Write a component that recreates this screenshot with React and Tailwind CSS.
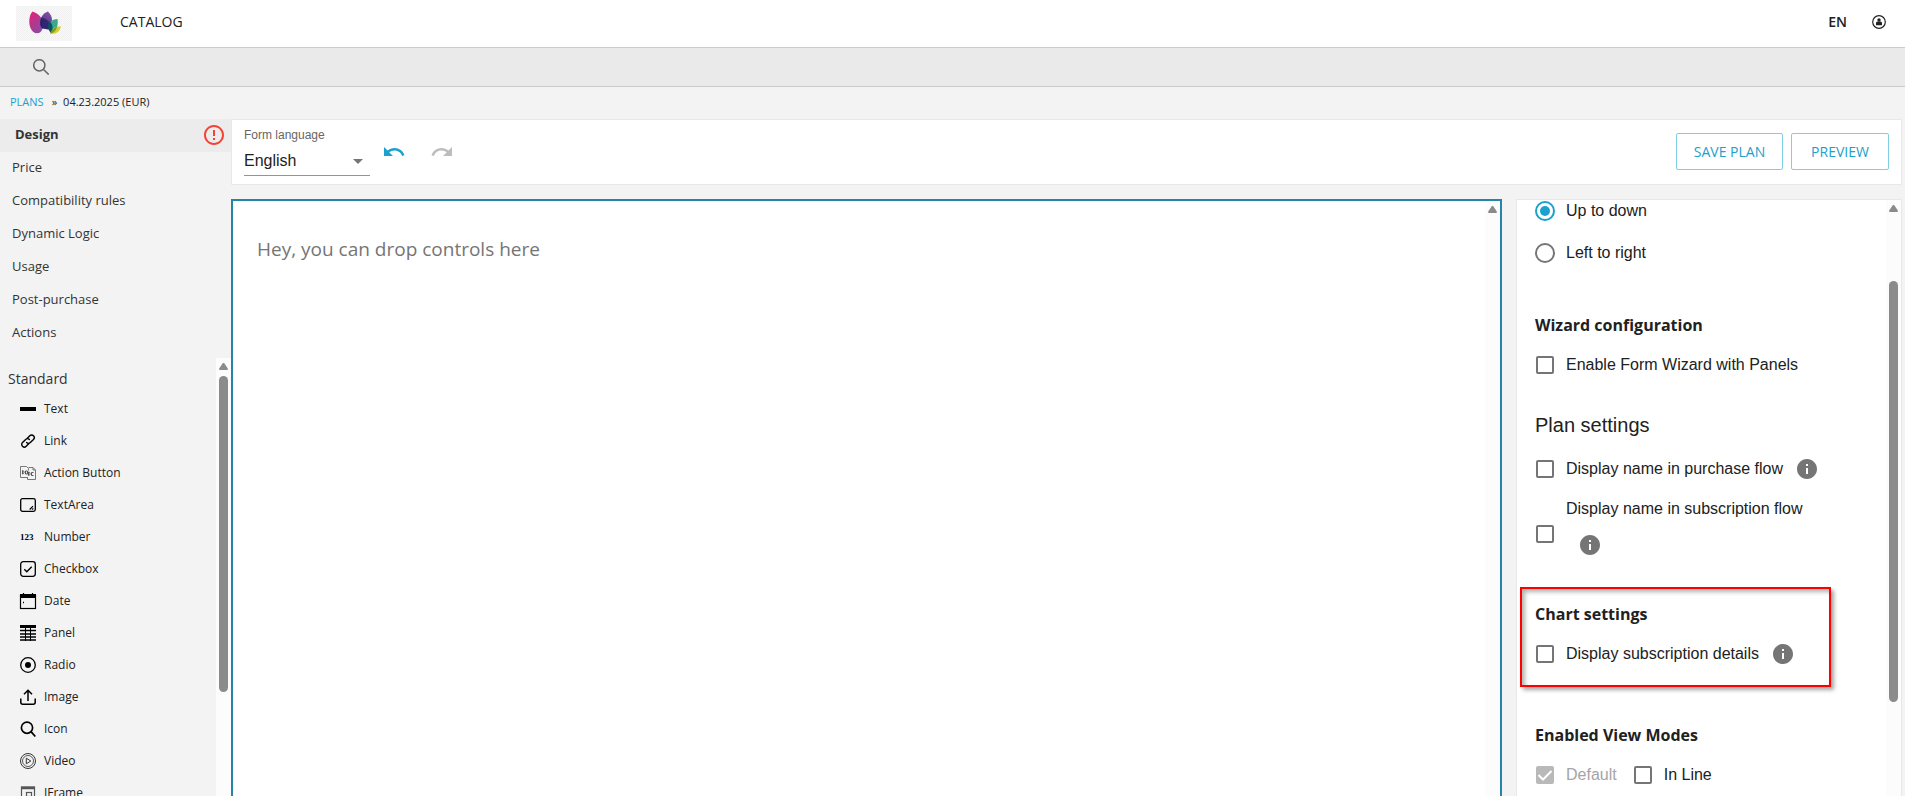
import React, { useState } from 'react';
import { MdErrorOutline, MdInfo, MdRedo, MdUndo } from 'react-icons/md';

const navItems = ['Design', 'Price', 'Compatibility rules', 'Dynamic Logic', 'Usage', 'Post-purchase', 'Actions'];

const Logo = () => (
  <svg viewBox="0 0 56 35" className="w-14 h-[35px]" aria-label="Home">
    <defs>
      <pattern id="logoDots" width="2" height="2" patternUnits="userSpaceOnUse">
        <rect width="2" height="2" fill="#f8f8f8" />
        <rect width="1" height="1" fill="#f1f1f1" />
        <rect x="1" y="1" width="1" height="1" fill="#f1f1f1" />
      </pattern>
      <linearGradient id="logoPink" x1="0" y1="0" x2="0.6" y2="1">
        <stop offset="0" stopColor="#ea1e79" />
        <stop offset="1" stopColor="#8b4a9e" />
      </linearGradient>
      <linearGradient id="logoPurple" x1="0.7" y1="0" x2="0.3" y2="1">
        <stop offset="0" stopColor="#8a4fa0" />
        <stop offset="1" stopColor="#2f3488" />
      </linearGradient>
    </defs>
    <rect width="56" height="35" fill="url(#logoDots)" />
    <path d="M16.500 5.500C13 9 12.500 17 14.500 22c1.800 4.500 6 6.500 9.500 4.500 3-2.500 4-7.500 2.500-12C25 10 21.500 7 16.500 5.500Z" fill="url(#logoPink)" />
    <path d="M32 5.500c-5 2-8 6-8 11 0 3.500 2 6 5 6.500 4 0 7-4 7-9C36 10.500 34.500 8 32 5.500Z" fill="url(#logoPurple)" />
    <path d="M41.500 13c-6 .3-9 3.500-9 8 .2 3 2 5.500 4 6C40.500 24.500 42.500 19 41.500 13Z" fill="#3aa78e" />
    <path d="M45 20.500c-6-.5-10 2-11 7 5 1.300 9.500-1 11-7Z" fill="#d6cf2b" />
    <path d="M26 11.500c-2.500 3.500-2.500 9 1 11.500 3-3 3-8-1-11.500Z" fill="#2a2170" />
    <path d="M27 12c4.500 1 8 6 8.500 11-4.500 1-8 0-9.500-3Z" fill="#33266f" />
    <path d="M33.500 15c-2 3.500-2 8.500 1.500 12 2.500-3.500 2-8.500-1.500-12Z" fill="#0d5060" />
    <path d="M34.500 27.500c.5-3.500 3-6 6.500-6.800-.5 3-2.700 6-6.500 6.800Z" fill="#7b9a2a" />
  </svg>
);

const SearchIcon = () => (
  <svg viewBox="0 0 16 16" className="w-4 h-4" fill="none" stroke="#666" strokeWidth="1.5">
    <circle cx="6.300" cy="6.300" r="5.600" />
    <path d="m10.300 10.300 5.400 5.300" />
  </svg>
);

const AccountIcon = () => (
  <svg viewBox="0 0 14 14" className="w-3.5 h-3.5">
    <circle cx="7" cy="7" r="6.300" fill="none" stroke="#222" strokeWidth="1.200" />
    <circle cx="7" cy="5" r="1.700" fill="#222" />
    <path d="M4 10.300V8.200C4 7 5 6.600 7 6.600s3 .4 3 1.600v2.100Z" fill="#222" />
  </svg>
);

// Palette glyphs, all on a 16px grid
const paletteItems = [
  { label: 'Text', icon: <path d="M0 8h16" strokeWidth="4" /> },
  {
    label: 'Link',
    icon: (
      <g strokeWidth="1.400" strokeLinecap="round">
        <path d="M7.300 5.200 9.800 2.700a2.600 2.600 0 0 1 3.700 3.700L10.300 9.600a2.600 2.600 0 0 1-3.700 0" />
        <path d="m8.700 10.800-2.500 2.500a2.600 2.600 0 0 1-3.700-3.700l3.200-3.200a2.600 2.600 0 0 1 3.700 0" />
      </g>
    ),
  },
  {
    label: 'Action Button',
    icon: (
      <g stroke="#777" strokeWidth="1">
        <path d="M7 12.500H.5v-11h6L8.500 3.500v2" />
        <path d="M7.500 12v2.500h8V5L13 2.500H8.500" />
        <path d="M13 2.500V5h2.500" />
        <path d="M2.500 5.500v3.500M2.500 5.500c2 0 2 3.500 0 3.500M5.500 6h2v3h-2ZM8.500 7v3.500M8.500 7c2 0 2 3.500 0 3.500M13.500 7.500h-2v3h2" stroke="#444" strokeWidth=".9" />
      </g>
    ),
  },
  {
    label: 'TextArea',
    icon: (
      <>
        <rect x=".7" y="1.700" width="14.600" height="12.600" rx="1.800" strokeWidth="1.300" />
        <path d="m9.700 12.500 3.300-3.300M12 12.700l1.300-1.300" strokeWidth="1.200" />
      </>
    ),
  },
  {
    label: 'Number',
    icon: (
      <text x="0" y="11" fontSize="9" fontWeight="bold" fill="#000" stroke="none" fontFamily="Liberation Serif, serif">
        123
      </text>
    ),
  },
  {
    label: 'Checkbox',
    icon: (
      <>
        <rect x=".7" y=".7" width="14.600" height="14.600" rx="2.500" strokeWidth="1.300" />
        <path d="m4.300 8.300 2.500 2.400 4.900-5" strokeWidth="1.400" />
      </>
    ),
  },
  {
    label: 'Date',
    icon: (
      <>
        <rect x=".5" y="2" width="15" height="13.500" strokeWidth="1.200" />
        <path d="M0 3h16" strokeWidth="4" />
        <path d="M3.500 0v2M12.500 0v2" strokeWidth="1.200" />
        <path d="M3 9.500h1" strokeWidth="1.500" />
      </>
    ),
  },
  {
    label: 'Panel',
    icon: (
      <>
        <path d="M0 1.500h16" strokeWidth="3" />
        <path d="M0 5.500h16M0 9h16M0 12h16M0 15h16" strokeWidth="1.600" />
        <path d="M5.500 3v13M10.500 3v13" strokeWidth="1" />
      </>
    ),
  },
  {
    label: 'Radio',
    icon: (
      <>
        <circle cx="8" cy="8" r="7.300" strokeWidth="1.300" />
        <circle cx="8" cy="8" r="3" fill="#000" stroke="none" />
      </>
    ),
  },
  {
    label: 'Image',
    icon: (
      <>
        <path d="M.8 9.500v3.700c0 1.200.8 2 2 2h10.400c1.200 0 2-.8 2-2V9.500" strokeWidth="1.500" />
        <path d="M8 12V1.200M4 5.200 8 1.200l4 4" strokeWidth="1.500" />
      </>
    ),
  },
  {
    label: 'Icon',
    icon: (
      <>
        <circle cx="7" cy="6.700" r="5.600" strokeWidth="1.700" />
        <path d="m11 10.700 4.300 4.800" strokeWidth="1.800" />
      </>
    ),
  },
  {
    label: 'Video',
    icon: (
      <g stroke="#333">
        <circle cx="8" cy="8" r="7.500" strokeWidth="1" />
        <circle cx="8" cy="8" r="5.500" strokeWidth=".8" />
        <path d="M6.300 5.200v5.600L10.800 8Z" strokeWidth="1" />
      </g>
    ),
  },
  {
    label: 'IFrame',
    icon: (
      <g stroke="#555">
        <rect x="1.500" y="2" width="13" height="12" strokeWidth="1.200" />
        <path d="M1 3h14" strokeWidth="2.500" />
        <rect x="6.500" y="7.500" width="5" height="4" strokeWidth="1.200" />
      </g>
    ),
  },
];

// thumb: classes with the offset and length of the scroll thumb
const ScrollTrack = ({ thumb }) => (
  <div className="w-[15px] shrink-0 h-full flex flex-col items-center bg-[#fcfcfc] pt-[5px] overflow-hidden">
    <svg viewBox="0 0 9 7" className="w-[9px] h-[7px] shrink-0" fill="#8b8b8b">
      <path d="M3.500.6a1.200 1.200 0 0 1 2 0L8.800 5.500c.4.800 0 1.500-.8 1.500H1C.2 7-.2 6.300.2 5.500Z" />
    </svg>
    {thumb && <div className={`w-[9px] shrink-0 rounded-full bg-[#8b8b8b] ${thumb}`} />}
  </div>
);

const InfoIcon = () => <MdInfo className="w-6 h-6 shrink-0 text-[#757575]" />;

const Tick = ({ id, label, defaultChecked, disabled }) => (
  <div className="flex items-center h-5 gap-3 pl-px">
    <span className="grid shrink-0">
      <input
        id={id}
        type="checkbox"
        defaultChecked={defaultChecked}
        disabled={disabled}
        className="peer col-start-1 row-start-1 appearance-none w-[18px] h-[18px] rounded-[2px] border-2 border-[#757575] checked:border-[#1ba1cd] checked:bg-[#1ba1cd] disabled:border-[#b9b9b9] disabled:checked:bg-[#b9b9b9]"
      />
      <svg viewBox="0 0 18 18" className="col-start-1 row-start-1 w-[18px] h-[18px] pointer-events-none invisible peer-checked:visible" fill="none" stroke="#fff" strokeWidth="2">
        <path d="m2.500 9 4.500 4.500L15.500 5" />
      </svg>
    </span>
    {label && <label htmlFor={id} className={`pb-px ${disabled ? 'text-[#a5a5a5]' : ''}`}>{label}</label>}
  </div>
);

const Direction = ({ id, label, defaultChecked }) => (
  <div className="flex items-center h-5 gap-[11px]">
    <input
      id={id}
      type="radio"
      name="direction"
      defaultChecked={defaultChecked}
      className="appearance-none w-5 h-5 shrink-0 rounded-full border-2 border-[#757575] p-[3px] bg-clip-content checked:border-[#1ba1cd] checked:bg-[#1ba1cd]"
    />
    <label htmlFor={id} className="pb-px">{label}</label>
  </div>
);

const SectionTitle = ({ children }) => (
  <h3 className="font-['Open_Sans',sans-serif] font-bold text-base leading-6">{children}</h3>
);

const Header = () => (
  <header className="flex items-center h-12 shrink-0 bg-white border-b border-[#ccc] pl-4 pr-[19px]">
    <a href="#home"><Logo /></a>
    <a href="#catalog" className="ml-12 text-sm pb-1">CATALOG</a>
    <button className="ml-auto text-sm font-semibold pb-1">EN</button>
    <button className="ml-[25px] pb-1" aria-label="Account"><AccountIcon /></button>
  </header>
);

const Sidebar = ({ active, onSelect }) => (
  <aside className="w-[231px] shrink-0 flex flex-col min-h-0">
    <nav className="shrink-0">
      {navItems.map((item) => (
        <a
          key={item}
          href="#plan"
          onClick={() => onSelect(item)}
          className={`flex items-center h-[33px] pb-px text-[13px] text-[#333] ${item === active ? 'bg-[#ececec] font-bold pl-[15px] pr-[5px]' : 'pl-3'}`}
        >
          {item}
          {item === 'Design' && <MdErrorOutline className="ml-auto w-6 h-6 text-[#f44336]" />}
        </a>
      ))}
    </nav>
    <div className="mt-2 flex-1 min-h-0 flex">
      <div className="flex-1 overflow-hidden pt-[11px]">
        <h2 className="pl-2 text-sm leading-5 text-[#333]">Standard</h2>
        <ul className="mt-1">
          {paletteItems.map(({ label, icon }) => (
            <li key={label} className="flex items-center h-8 pl-5 gap-2 text-xs">
              <svg viewBox="0 0 16 16" className="w-4 h-4 shrink-0 overflow-visible" fill="none" stroke="#000">{icon}</svg>
              {label}
            </li>
          ))}
        </ul>
      </div>
      <ScrollTrack thumb="mt-[6px] h-[316px]" />
    </div>
  </aside>
);

const Toolbar = () => (
  <div className="flex items-center h-[66px] shrink-0 bg-white border border-[#e8e8e8] pl-3 pr-3 pb-px">
    <div className="w-[126px] border-b border-[#949494] font-['Liberation_Sans',Arial,sans-serif]">
      <label htmlFor="language" className="block text-xs leading-4 text-[#666]">Form language</label>
      <div className="grid items-center mt-1">
        <select id="language" className="col-start-1 row-start-1 appearance-none w-full h-7 text-base">
          <option>English</option>
        </select>
        <svg viewBox="0 0 10 5" className="col-start-1 row-start-1 justify-self-end mr-[7px] w-2.5 h-[5px] pointer-events-none" fill="#757575">
          <path d="M0 0h10L5 5Z" />
        </svg>
      </div>
    </div>
    <button className="ml-3" aria-label="Undo"><MdUndo className="w-6 h-6 text-[#1ba1cd]" /></button>
    <button className="ml-6" aria-label="Redo" disabled><MdRedo className="w-6 h-6 text-[#bdbdbd]" /></button>
    <div className="ml-auto flex gap-2 text-sm text-[#1ba1cd]">
      <button className="w-[107px] h-[37px] border border-[#81cfe5] rounded-[2px]">SAVE PLAN</button>
      <button className="w-[98px] h-[37px] border border-[#81cfe5] rounded-[2px]">PREVIEW</button>
    </div>
  </div>
);

const SettingsPanel = () => (
  <section className="w-[386px] shrink-0 flex bg-white border border-b-0 border-[#e8e8e8]">
    <div className="flex-1 overflow-hidden pl-[18px] pt-px text-base leading-5 font-['Liberation_Sans',Arial,sans-serif]">
      <div className="flex flex-col gap-[22px]">
        <Direction id="up-down" label="Up to down" defaultChecked />
        <Direction id="left-right" label="Left to right" />
      </div>

      <div className="mt-[50px] flex flex-col gap-[18px]">
        <SectionTitle>Wizard configuration</SectionTitle>
        <Tick id="wizard" label="Enable Form Wizard with Panels" />
      </div>

      <h2 className="mt-9 text-xl leading-7">Plan settings</h2>
      <div className="mt-5 flex items-center h-5 gap-3">
        <Tick id="purchase-name" label="Display name in purchase flow" />
        <InfoIcon />
      </div>
      <div className="mt-5 flex items-center gap-3">
        <Tick id="subscription-name" />
        <div className="pb-3">
          <label htmlFor="subscription-name" className="block">Display name in subscription flow</label>
          <div className="mt-3.5 pl-3"><InfoIcon /></div>
        </div>
      </div>

      {/* Highlighted block */}
      <div className="mt-[18px] -ml-[15px] w-[311px] h-[100px] border-2 border-[#f00] pl-[13px] pt-[13px] flex flex-col gap-[18px] shadow-[3px_3px_4px_rgba(0,0,0,0.35),inset_3px_3px_4px_rgba(0,0,0,0.3)]">
        <SectionTitle>Chart settings</SectionTitle>
        <div className="flex items-center h-5 gap-3">
          <Tick id="subscription-details" label="Display subscription details" />
          <InfoIcon />
        </div>
      </div>

      <div className="mt-9 flex flex-col gap-[18px]">
        <SectionTitle>Enabled View Modes</SectionTitle>
        <div className="flex gap-4">
          <Tick id="mode-default" label="Default" defaultChecked disabled />
          <Tick id="mode-inline" label="In Line" />
        </div>
      </div>
    </div>
    <ScrollTrack thumb="mt-[69px] h-[421px]" />
  </section>
);

const App = () => {
  const [active, setActive] = useState('Design');

  return (
    <div className="h-screen flex flex-col overflow-hidden bg-[#f3f3f3] text-[#212121] font-['Open_Sans',sans-serif]">
      <Header />
      <div className="flex items-center h-[39px] shrink-0 bg-[#eaeaea] border-b border-[#ccc] pl-[33px]">
        <button aria-label="Search"><SearchIcon /></button>
      </div>
      <div className="flex items-center h-8 shrink-0 pl-2.5 pb-0.5 text-[11px]">
        <a href="#plans" className="text-[#1ba1cd]">PLANS</a>
        <span className="ml-2">»</span>
        <span className="ml-1.5">04.23.2025 (EUR)</span>
      </div>
      <div className="flex-1 min-h-0 flex pr-[3px]">
        <Sidebar active={active} onSelect={setActive} />
        <main className="flex-1 min-w-0 flex flex-col">
          <Toolbar />
          <div className="mt-3.5 flex-1 min-h-0 flex gap-3.5">
            <section className="flex-1 min-w-0 flex bg-white border-2 border-b-0 border-[#2684a8]">
              <p className="flex-1 pl-6 pt-[34px] text-[19px] leading-7 text-[#757575]">Hey, you can drop controls here</p>
              <ScrollTrack />
            </section>
            <SettingsPanel />
          </div>
        </main>
      </div>
    </div>
  );
};

export default App;
